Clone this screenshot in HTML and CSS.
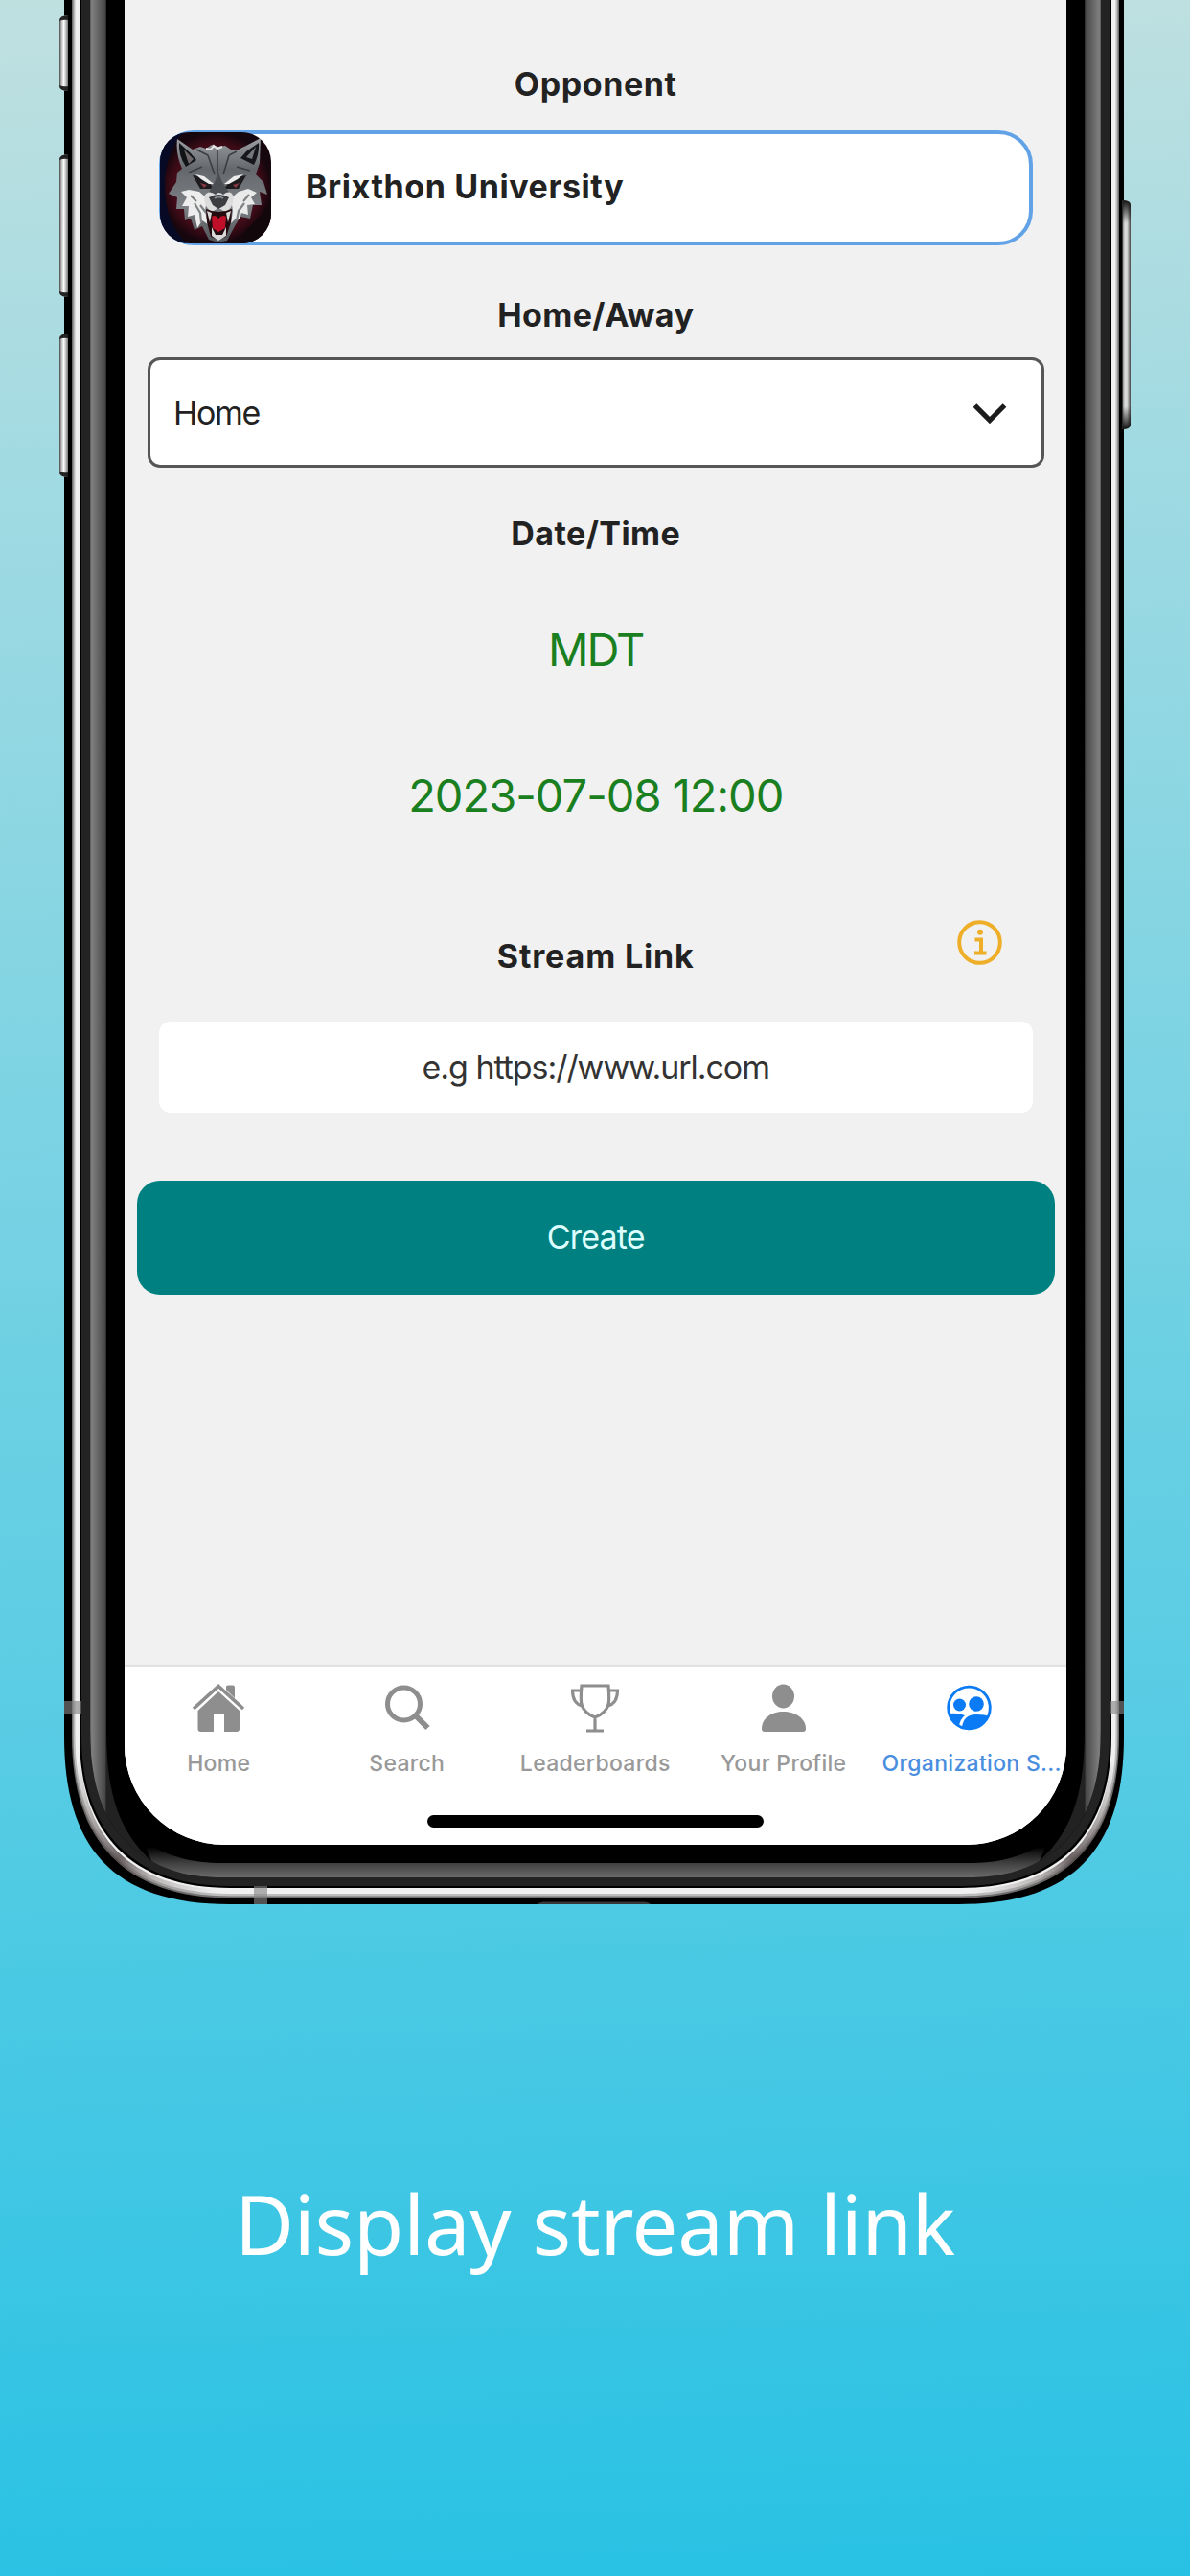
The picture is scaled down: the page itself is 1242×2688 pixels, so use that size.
FILE: index.html
```html
<!DOCTYPE html>
<html lang="en">
<head>
<meta charset="utf-8">
<title>Display stream link</title>
<link rel="stylesheet" href="styles.css">
</head>
<body>
<main class="poster">
  <section class="phone">
    <svg class="frame" viewBox="0 0 1242 1990" aria-hidden="true">
      <defs>
        <linearGradient id="key" x1="0" x2="1" y1="0" y2="0">
          <stop offset="0" stop-color="#444"/><stop offset=".22" stop-color="#b4b4b4"/><stop offset=".5" stop-color="#fafafa"/><stop offset=".7" stop-color="#ccc"/><stop offset="1" stop-color="#777"/>
        </linearGradient>
        <linearGradient id="keyRight" x1="0" x2="1" y1="0" y2="0">
          <stop offset="0" stop-color="#777"/><stop offset=".3" stop-color="#ddd"/><stop offset=".6" stop-color="#d0d0d0"/><stop offset="1" stop-color="#444"/>
        </linearGradient>
        <linearGradient id="keyEnds" x1="0" x2="0" y1="0" y2="1">
          <stop offset="0" stop-color="#111"/><stop offset=".1" stop-color="#111" stop-opacity="0"/><stop offset=".9" stop-color="#111" stop-opacity="0"/><stop offset="1" stop-color="#111"/>
        </linearGradient>
        <linearGradient id="side" gradientUnits="userSpaceOnUse" x1="94" x2="111" y1="0" y2="0">
          <stop offset="0" stop-color="#555"/><stop offset=".1" stop-color="#808080"/><stop offset=".92" stop-color="#484848"/><stop offset="1" stop-color="#222"/>
        </linearGradient>
        <linearGradient id="lip" gradientUnits="userSpaceOnUse" x1="0" x2="0" y1="1927" y2="1959">
          <stop offset="0" stop-color="#000"/><stop offset=".54" stop-color="#414141"/><stop offset="1" stop-color="#6a6a6a"/>
        </linearGradient>
        <linearGradient id="shade" gradientUnits="userSpaceOnUse" x1="79" x2="225" y1="1840" y2="1976">
          <stop offset="0" stop-color="#6a6060" stop-opacity="0"/><stop offset=".25" stop-color="#6a6060" stop-opacity=".45"/><stop offset=".5" stop-color="#4d4242" stop-opacity=".8"/><stop offset=".7" stop-color="#6a6060" stop-opacity=".4"/><stop offset="1" stop-color="#6a6060" stop-opacity="0"/>
        </linearGradient>
        <g id="corner">
          <path d="M94,-10 V1805 C94,1880 118,1919 158,1942 C126,1912 111,1876 111,1805 V-10 Z" fill="url(#side)"/>
          <path d="M158,1942 C178,1953 200,1959 232,1959 H622 V1944 H232 C200,1944 178,1938 150,1922 Z" fill="url(#lip)"/>
          <path d="M79,1815 C79,1920 134,1976 240,1976" fill="none" stroke="url(#shade)" stroke-width="8"/>
        </g>
      </defs>
      <path d="M67,-10 V1812 C67,1926 116,1987 240,1987 H1000 C1124,1987 1173,1926 1173,1812 V-10 Z" fill="#000"/>
      <path d="M75,-10 V1812 C75,1921 131,1980.5 240,1980.5 H1003 C1112,1980.5 1168,1921 1168,1812 V-10 Z" fill="#6f6f6f"/>
      <path d="M76.5,-10 V1812 C76.5,1920 132,1978.500 240,1978.500 H1003 C1111,1978.500 1166.500,1920 1166.500,1812 V-10 Z" fill="#bdbdbd"/>
      <path d="M78.500,-10 V1812 C78.500,1919 134,1976 240,1976 H1003 C1109,1976 1164.500,1919 1164.500,1812 V-10 Z" fill="#f0f0f0"/>
      <path d="M83,-10 V1812 C83,1914 138,1970 240,1970 H1003 C1105,1970 1160,1914 1160,1812 V-10 Z" fill="#000"/>
      <path d="M85,-10 V1812 C85,1912 140,1968 240,1968 H1003 C1103,1968 1158,1912 1158,1812 V-10 Z" fill="#232323"/>
      <path d="M94,-10 V1805 C94,1880 118,1919 158,1942 C178,1953 200,1959 232,1959 H1011 C1043,1959 1065,1953 1085,1942 C1125,1919 1149,1880 1149,1805 V-10 Z" fill="#000"/>
      <use href="#corner"/>
      <use href="#corner" transform="translate(1243 0) scale(-1 1)"/>
      <g fill="#858585" fill-opacity=".62">
        <rect x="67" y="1775" width="18" height="13.500"/>
        <rect x="1158" y="1775" width="15" height="13.500"/>
        <rect x="265" y="1968" width="14" height="19"/>
      </g>
      <path d="M561,1987 Q563,1984.500 567,1984.500 H673 Q677,1984.500 679,1987 Z" fill="#383838"/>
      <g fill="url(#key)">
        <path d="M71,16 Q62,16 62,22 V89 Q62,95 71,95 Z"/>
        <path d="M71,161 Q62,161 62,167 V304 Q62,310 71,310 Z"/>
        <path d="M71,348 Q62,348 62,354 V492 Q62,498 71,498 Z"/>
      </g>
      <g fill="#222">
        <path d="M71,16 Q62,16 62,22 Q66,20 71,21 Z M71,95 Q62,95 62,89 Q66,91 71,90 Z"/>
        <path d="M71,161 Q62,161 62,167 Q66,165 71,166 Z M71,310 Q62,310 62,304 Q66,306 71,305 Z"/>
        <path d="M71,348 Q62,348 62,354 Q66,352 71,353 Z M71,498 Q62,498 62,492 Q66,494 71,493 Z"/>
      </g>
      <path d="M1171.500,209 Q1180,209 1180,214 V443 Q1180,448 1171.500,448 Z" fill="url(#keyRight)"/>
      <path d="M1171.500,209 Q1180,209 1180,214 V443 Q1180,448 1171.500,448 Z" fill="url(#keyEnds)"/>
    </svg>

    <div class="screen">
      <div class="form">
        <h2 class="label">Opponent</h2>
        <div class="opponent">
          <svg class="crest" viewBox="0 0 116 116" aria-hidden="true">
            <defs>
              <radialGradient id="night"><stop offset="0" stop-color="#5b1422"/><stop offset=".8" stop-color="#3d0b17"/><stop offset="1" stop-color="#16060d"/></radialGradient>
              <linearGradient id="fur" x1="0" x2="0" y1="0" y2="1"><stop offset="0" stop-color="#9a9ea2"/><stop offset=".3" stop-color="#64686d"/><stop offset=".65" stop-color="#7d8186"/><stop offset="1" stop-color="#515458"/></linearGradient>
            </defs>
            <rect width="116" height="116" fill="url(#night)"/>
            <path d="M0,0 H24 Q4,24 5,58 Q6,96 28,116 H0 Z" fill="#070a24"/>
            <path d="M116,116 H78 L92,100 L106,86 L116,70 Z" fill="#12070b"/>
            <path d="M18,7 L34,18 L42,15 L48,17 L54,13 L60,15 L68,14 L74,18 L82,18 L105,6 L104,32 L100,44 L108,52 L112,65 L104,62 L106,76 L97,76 L94,90 L84,88 L78,98 L70,113 L61,115 L51,112 L44,98 L36,102 L32,90 L26,92 L25,80 L17,80 L18,68 L9,64 L17,52 L18,42 L23,38 Q16,22 18,7 Z" fill="url(#fur)"/>
            <path d="M20,11 L32,22 L38,29 L27,36 Q19,24 20,11 Z" fill="#111417"/>
            <path d="M103,11 L90,20 L84,27 L98,34 Q104,22 103,11 Z" fill="#17171b"/>
            <path d="M25,18 L35,28 L30,33 Z" fill="#6f686b"/>
            <path d="M100,15 L96,28 L90,26 Z" fill="#74777b"/>
            <path d="M38,18 L50,24 M80,20 L72,24 M60,18 V44 M50,24 L57,44 M72,24 L66,44 M30,42 L44,36 M94,40 L80,36" stroke="#3b3f43" stroke-width="1.600" fill="none"/>
            <path d="M48,17 L53,18 L56,14 L60,17 L65,15" stroke="#e4e4e4" stroke-width="2" fill="none"/>
            <path d="M30,60 L41,62 L49,69 L47,82 L50,96 L44,92 L39,100 L36,86 L29,88 L30,77 L23,77 L28,68 L22,62 Z" fill="#ededed"/>
            <path d="M92,59 L82,62 L74,69 L76,82 L74,95 L79,90 L83,90 L85,84 L92,86 L91,76 L99,75 L95,68 L101,63 Z" fill="#eaeaea"/>
            <path d="M36,74 L42,84 L43,94 M88,74 L82,82 L80,92 M48,84 L42,76 M32,66 L38,72 M93,65 L87,72" stroke="#7f8386" stroke-width="2.200" fill="none"/>
            <path d="M34,45 L46,47 L57,59 L42,59 Z M90,45 L78,47 L66,59 L82,59 Z" fill="#1d1b1e"/>
            <path d="M37,44 L46,46 L56,54 L51,54 L43,49 Z M87,44 L77,46 L67,54 L72,54 L81,49 Z" fill="#ececec"/>
            <path d="M42,53 l7,2 l-3,3 z M83,53 l-7,2 l3,3 z" fill="#8a3742"/>
            <path d="M57,52 L61,42 L65,52 L74,66 L61,70 L49,66 Z" fill="#4b4f54"/>
            <path d="M46,67 Q50,59 58,65 Q61,61 66,65 Q74,59 77,68 Q76,80 68,83 L61,79 L54,83 Q46,78 46,67 Z" fill="#dcdcdc"/>
            <path d="M51,68 Q61,62 72,68 L68,76 L61,80 L55,76 Z" fill="#3a3c40"/>
            <path d="M57,69 Q61,66 66,69" stroke="#888c91" stroke-width="2" fill="none"/>
            <path d="M48,80 Q61,86 75,80 L74,94 L69,109 L61,112 L53,109 L49,94 Z" fill="#240a0f"/>
            <path d="M54,88 Q58,85 61,90 Q65,85 69,88 L68,100 L61,104 L55,100 Z" fill="#c01029"/>
            <path d="M49,82 L54,84 L52,94 Z M74,82 L69,84 L71,94 Z M54,108 L54,99 L58,107 L65,107 L69,99 L69,108 L61,113 Z" fill="#d8d8d8"/>
          </svg>
          <span class="opponent-name">Brixthon University</span>
        </div>

        <h2 class="label label-venue">Home/Away</h2>
        <div class="select">
          <span class="select-value">Home</span>
          <svg class="chevron" viewBox="0 0 36 24" aria-hidden="true"><path d="M2.500,3 L18,18.500 L33.500,3" fill="none" stroke="#1c1c1c" stroke-width="5.200"/></svg>
        </div>

        <h2 class="label label-date">Date/Time</h2>
        <p class="zone">MDT</p>
        <p class="datetime">2023-07-08 12:00</p>

        <div class="stream-head">
          <h2 class="label label-stream">Stream Link</h2>
          <svg class="info" viewBox="0 0 47 47" fill="none" stroke="#eeae28" aria-hidden="true">
            <circle cx="23.500" cy="23.500" r="21.300" stroke-width="4"/>
            <circle cx="24" cy="12.700" r="3" fill="#eeae28" stroke="none"/>
            <path d="M18.500,20.500 H25 V34 M18,34.500 H30.500" stroke-width="4"/>
          </svg>
        </div>
        <div class="url">e.g https://www.url.com</div>
        <div class="create">Create</div>
      </div>

      <nav class="tabs">
        <div class="tab">
          <svg class="icon" viewBox="0 0 56 52" aria-hidden="true"><path d="M2,27 L28,3.500 L54,27" fill="none" stroke="#8e8e8e" stroke-width="3.600"/><path d="M36,7 V4 Q36,2.500 38,2.500 H43 Q45,2.500 45,4.500 V16 Z M28,9 L50,29 V48 Q50,51 47,51 H34 V33 H23 V51 H9.500 Q6.500,51 6.500,48 V29 Z" fill="#8e8e8e"/></svg>
          <span>Home</span>
        </div>
        <div class="tab">
          <svg class="icon" viewBox="0 0 56 52" fill="none" stroke="#8e8e8e" aria-hidden="true"><circle cx="24.500" cy="22" r="17" stroke-width="5"/><path d="M36,33.500 L49.500,47" stroke-width="6"/></svg>
          <span>Search</span>
        </div>
        <div class="tab">
          <svg class="icon" viewBox="0 0 56 52" fill="none" stroke="#8e8e8e" stroke-width="3.200" aria-hidden="true"><path d="M14,3 H42 Q43,12 42.500,20 Q41,31 28,36 Q15,31 13.500,20 Q13,12 14,3 Z M13,8 H4.500 Q4.500,21 14,24 M43,8 H51.500 Q51.500,21 42,24 M28,36 V50 M19,50 H37"/></svg>
          <span>Leaderboards</span>
        </div>
        <div class="tab">
          <svg class="icon" viewBox="0 0 56 52" fill="#8e8e8e" aria-hidden="true"><ellipse cx="27.500" cy="14" rx="11.500" ry="12.500"/><path d="M5,48 C5,37 15,30 27.500,30 C40,30 51,37 51,48 Q51,51 48,51 H8 Q5,51 5,48 Z"/></svg>
          <span>Your Profile</span>
        </div>
        <div class="tab tab-active">
          <svg class="icon" viewBox="0 0 56 52" aria-hidden="true"><circle cx="25.500" cy="26" r="21.800" fill="none" stroke="#0a7bf5" stroke-width="2.800"/><g fill="#0a7bf5"><circle cx="15.500" cy="23" r="6.500"/><circle cx="33" cy="22" r="7.800"/><path d="M4,32 Q14,31 21,34 Q16,38 15,45 Q6,41 4,32 Z"/><path d="M18,46 Q20,33 33,33 Q43,33 46,35 Q40,48 26,48 Q21,48 18,46 Z"/></g></svg>
          <span>Organization S...</span>
        </div>
        <div class="home-bar"></div>
      </nav>
    </div>
  </section>
  <p class="caption">Display stream link</p>
</main>
</body>
</html>
```
FILE: styles.css
```css
* { box-sizing: border-box; }

body {
  margin: 0;
  font-family: Inter, "Liberation Sans", sans-serif;
  color: #222;
}

h2, p { margin: 0; }

.poster {
  width: 1242px;
  height: 2688px;
  overflow: hidden;
  background: linear-gradient(178deg, #c0e0e0 0%, #9bd9e2 22%, #4dcae4 74%, #28c1e4 100%);
}

.phone {
  position: relative;
  height: 1990px;
  padding-left: 130px;
}

.frame {
  position: absolute;
  left: 0;
  top: 0;
  width: 1242px;
  height: 1990px;
}

.screen {
  position: relative;
  display: flex;
  flex-direction: column;
  width: 982.5px;
  height: 1925px;
  overflow: hidden;
  background: #f1f1f1;
  border-radius: 0 0 104px 104px;
}

.form {
  flex: 1;
  display: flex;
  flex-direction: column;
  padding: 68px 12px 0 13px;
}

.label {
  font-size: 34px;
  font-weight: 700;
  letter-spacing: 0.6px;
  line-height: 40px;
  text-align: center;
}

.opponent {
  display: flex;
  align-items: center;
  gap: 36px;
  height: 120px;
  margin: 28px 23px 0;
  background: #fff;
  border: 4px solid #62a3e8;
  border-radius: 36px;
}

.crest {
  width: 116px;
  height: 116px;
  margin-left: -3px;
  border-radius: 31px;
}

.opponent-name {
  font-size: 34px;
  font-weight: 700;
  letter-spacing: 0.6px;
  line-height: 40px;
  white-space: nowrap;
  padding-bottom: 2px;
}

.label-venue { margin-top: 53px; letter-spacing: 0.4px; }

.select {
  display: flex;
  align-items: center;
  justify-content: space-between;
  height: 115px;
  margin: 24px 11px 0;
  padding: 0 36px 0 24px;
  background: #fff;
  border: 3.5px solid #565656;
  border-radius: 13px;
  font-size: 34px;
  letter-spacing: -1.3px;
}

.chevron { width: 36px; height: 24px; margin-top: 3px; }

.label-date { margin-top: 49px; letter-spacing: 0.45px; }

.zone, .datetime {
  color: #1a7f1f;
  font-size: 47px;
  line-height: 60px;
  text-align: center;
}

.zone { margin-top: 71px; letter-spacing: -2px; }
.datetime { margin-top: 92px; letter-spacing: -1px; }

.stream-head {
  display: grid;
  grid-template-columns: 1fr auto 1fr;
  height: 58px;
  margin-top: 100px;
}

.label-stream { grid-column: 2; align-self: end; letter-spacing: 0.85px; }

.info {
  justify-self: end;
  width: 47px;
  height: 47px;
  margin-right: 55px;
}

.url {
  display: flex;
  align-items: center;
  justify-content: center;
  height: 95px;
  margin: 48px 23px 0;
  background: #fff;
  border-radius: 12px;
  font-size: 34px;
  letter-spacing: -1.05px;
  color: #333;
}

.create {
  display: flex;
  align-items: center;
  justify-content: center;
  height: 119px;
  margin-top: 71px;
  padding-bottom: 2px;
  background: #008080;
  border-radius: 24px;
  color: #dff;
  font-size: 34px;
  letter-spacing: -0.85px;
}

.tabs {
  display: grid;
  grid-template-columns: repeat(5, 1fr);
  grid-template-rows: 138px 1fr;
  height: 186px;
  padding-top: 17px;
  background: #fff;
  box-shadow: 0 -2px 1px #e2e2e2;
}

.tab {
  display: flex;
  flex-direction: column;
  align-items: center;
  gap: 17px;
  color: #999;
  font-size: 23px;
  font-weight: 500;
  line-height: 30px;
  letter-spacing: 0.3px;
  white-space: nowrap;
}

.tab-active { color: #4a8ee0; }

.icon { width: 56px; height: 52px; }

.home-bar {
  grid-column: 1 / -1;
  justify-self: center;
  width: 351px;
  height: 13px;
  border-radius: 7px;
  background: #000;
}

.caption {
  margin-top: 271px;
  color: #fff;
  font-family: "Noto Sans", sans-serif;
  font-size: 85px;
  letter-spacing: -0.2px;
  line-height: 118px;
  text-align: center;
}
```
